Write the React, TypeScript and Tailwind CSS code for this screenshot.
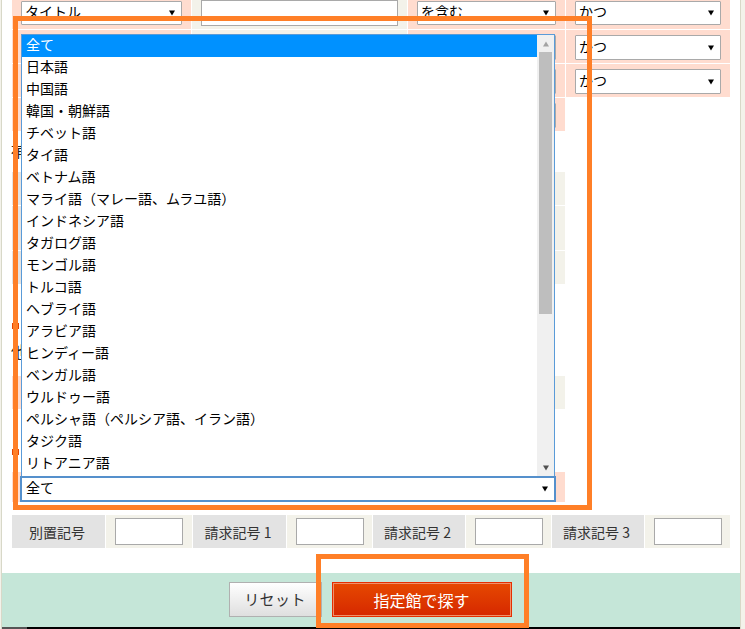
import React from "react";

const languages = [
  "全て", "日本語", "中国語", "韓国・朝鮮語", "チベット語", "タイ語", "ベトナム語",
  "マライ語（マレー語、ムラユ語）", "インドネシア語", "タガログ語", "モンゴル語", "トルコ語",
  "ヘブライ語", "アラビア語", "ヒンディー語", "ベンガル語", "ウルドゥー語",
  "ペルシャ語（ペルシア語、イラン語）", "タジク語", "リトアニア語",
];

function Tri({ className }: { className: string }) {
  return (
    <svg viewBox="0 0 6 6" className={className} aria-hidden="true">
      <path d="M0 0.5H6L3 5.5Z" fill="currentColor" />
    </svg>
  );
}

function Sel({ text, className }: { text?: string; className: string }) {
  return (
    <div className={`flex items-center justify-between bg-white border border-[#a9a9a9] rounded-[1px] pl-[3px] pr-[6px] text-[14px] text-black ${className}`}>
      <span className="leading-[19px] mt-[-3px]">{text}</span>
      <Tri className="w-[6px] h-[6px] text-black" />
    </div>
  );
}

function SearchRow({ h, pad, inputH, selH, op, conj, field }: { h: string; pad: string; inputH: string; selH: string; op?: string; conj: string; field?: string }) {
  return (
    <div className={`flex gap-[1px] ${h}`}>
      <div className={`w-[179px] bg-[#ffdccf] pl-[9px] ${pad}`}>
        <Sel text={field} className={`w-[161px] ${selH}`} />
      </div>
      <div className="w-[215px] bg-[#f3f2ea] pl-[9px]">
        <input readOnly className={`block w-[197px] bg-white border border-[#a9a9a9] ${inputH}`} />
      </div>
      <div className={`w-[157px] bg-[#ffdccf] pl-[9px] ${pad}`}>
        <Sel text={op} className={`w-[139px] ${selH}`} />
      </div>
      <div className={`w-[164px] bg-[#ffdccf] pl-[9px] ${pad}`}>
        <Sel text={conj} className={`w-[146px] ${selH}`} />
      </div>
    </div>
  );
}

function PlainRow({ h, left, right }: { h: string; left: string; right: string }) {
  return (
    <div className={`flex w-[553px] ${h}`}>
      <div className={`w-[100px] ${left}`} />
      <div className={`flex-1 ${right}`} />
    </div>
  );
}

function CallNo({ label, w, cw }: { label: string; w: string; cw: string }) {
  return (
    <div className="flex gap-[1px]">
      <div className={`${w} h-[33px] bg-[#e3e3e3] flex items-center justify-center text-[14px] text-[#333] pt-[1px] pr-[3px]`}>{label}</div>
      <div className={`${cw} h-[33px] bg-[#f3f2ea] flex items-center pl-[9px]`}>
        <input readOnly className="block w-[68px] h-[27px] bg-white border border-[#a9a9a9]" />
      </div>
    </div>
  );
}

export default function App() {
  return (
    <div className="relative w-[745px] h-[629px] overflow-hidden bg-[#f3f2ea] font-['Noto_Sans_CJK_JP',sans-serif]">
      <div className="ml-[1px] w-[740px] h-[629px] bg-white border-l border-r border-[#d8d8c8] flex flex-col">
        <div className="pl-[10px] flex flex-col gap-[1px]">
          <SearchRow h="h-[29px]" pad="pt-[1px]" inputH="h-[26px]" selH="h-[24px]" field="タイトル" op="を含む" conj="かつ" />
          <SearchRow h="h-[33px]" pad="pt-[5px]" inputH="h-[26px] mt-[5px]" selH="h-[25px]" conj="かつ" />
          <SearchRow h="h-[33px]" pad="pt-[5px]" inputH="h-[26px] mt-[5px]" selH="h-[25px]" conj="かつ" />
          <div className="w-[553px] h-[33px] bg-[#ffdccf] pl-[9px] pt-[5px]">
            <Sel className="w-[535px] h-[25px]" />
          </div>
        </div>

        <div className="pl-[9px] h-[41px] pb-[4px] flex items-center text-[16px] leading-none text-[#222]">補</div>

        <div className="pl-[10px] flex flex-col gap-[1px]">
          <PlainRow h="h-[33px]" left="bg-[#e3e3e3]" right="bg-[#f3f2ea]" />
          <PlainRow h="h-[44px]" left="bg-[#e3e3e3]" right="bg-[#f3f2ea]" />
          <PlainRow h="h-[33px]" left="bg-[#e3e3e3]" right="bg-[#f3f2ea]" />
        </div>

        <div className="h-[92px] pl-[10px] flex flex-col">
          <div className="mt-[39px] w-[7px] h-[6px] bg-[#e64500]" />
          <div className="mt-[14px] ml-[-1px] text-[16px] leading-none text-[#222]">他</div>
        </div>

        <div className="pl-[10px]">
          <PlainRow h="h-[33px]" left="bg-[#ffdccf]" right="bg-[#f3f2ea]" />
        </div>

        <div className="h-[63px] pl-[10px]">
          <div className="pt-[40px]">
            <div className="w-[7px] h-[6px] bg-[#e64500]" />
          </div>
        </div>

        <div className="pl-[10px]">
          <div className="w-[553px] h-[30px] bg-[#ffdccf]" />
        </div>

        <div className="mt-[13px] pl-[10px] flex gap-[1px]">
          <CallNo label="別置記号" w="w-[93px]" cw="w-[86px]" />
          <CallNo label="請求記号 1" w="w-[93px]" cw="w-[85px]" />
          <CallNo label="請求記号 2" w="w-[92px]" cw="w-[85px]" />
          <CallNo label="請求記号 3" w="w-[92px]" cw="w-[85px]" />
        </div>

        <div className="mt-[25px] h-[54px] bg-[#c5e6d8] flex items-start justify-center gap-[10px] pt-[9px] pr-[2px]">
          <button className="w-[93px] h-[35px] border border-[#b0b0b0] bg-gradient-to-b from-white to-[#dfdfdf] text-[15px] text-[#333] tracking-[0.4px]">
            リセット
          </button>
          <button className="w-[180px] h-[35px] border border-[#e62e00] bg-gradient-to-b from-[#e64800] to-[#d62600] text-[16px] text-white shadow-[inset_0_0_0_1px_#f0906a]">
            指定館で探す
          </button>
        </div>
        <div className="h-[2px] bg-black flex">
          <div className="w-[25px] bg-[#555]" />
        </div>
      </div>

      {/* open dropdown list */}
      <div className="absolute left-[21px] top-[34px] w-[534px] h-[442px] bg-white border border-[#5a9bd8] border-b-0 flex text-[14px] text-black">
        <div className="flex-1">
          {languages.map((l, i) => (
            <div key={l} className={`h-[22px] leading-[18px] pl-[4px] ${i === 0 ? "bg-[#0091ff] text-white" : ""}`}>{l}</div>
          ))}
        </div>
        <div className="w-[17px] bg-[#f0f0f0] flex flex-col items-center">
          <div className="h-[17px] flex items-center justify-center"><Tri className="w-[8px] h-[6px] rotate-180 text-[#a3a3a3]" /></div>
          <div className="w-[13px] h-[262px] bg-[#bebebe]" />
          <div className="flex-1 flex items-end pb-[5px]"><Tri className="w-[8px] h-[6px] text-[#505050]" /></div>
        </div>
      </div>
      {/* focused select below list */}
      <div className="absolute left-[20px] top-[476px] w-[536px] h-[26px] bg-white border-2 border-[#5590cc] flex items-center justify-between pl-[4px] pr-[6px] text-[14px] text-black">
        <span className="leading-[19px] mt-[-3px]">全て</span>
        <Tri className="w-[6px] h-[6px] text-black" />
      </div>

      {/* annotation frames */}
      <div className="absolute left-[13px] top-[16px] w-[579px] h-[494px] border-[5px] border-[#ff7f27]" />
      <div className="absolute left-[316px] top-[554px] w-[213px] h-[74px] border-[5px] border-[#ff7f27]" />
    </div>
  );
}
